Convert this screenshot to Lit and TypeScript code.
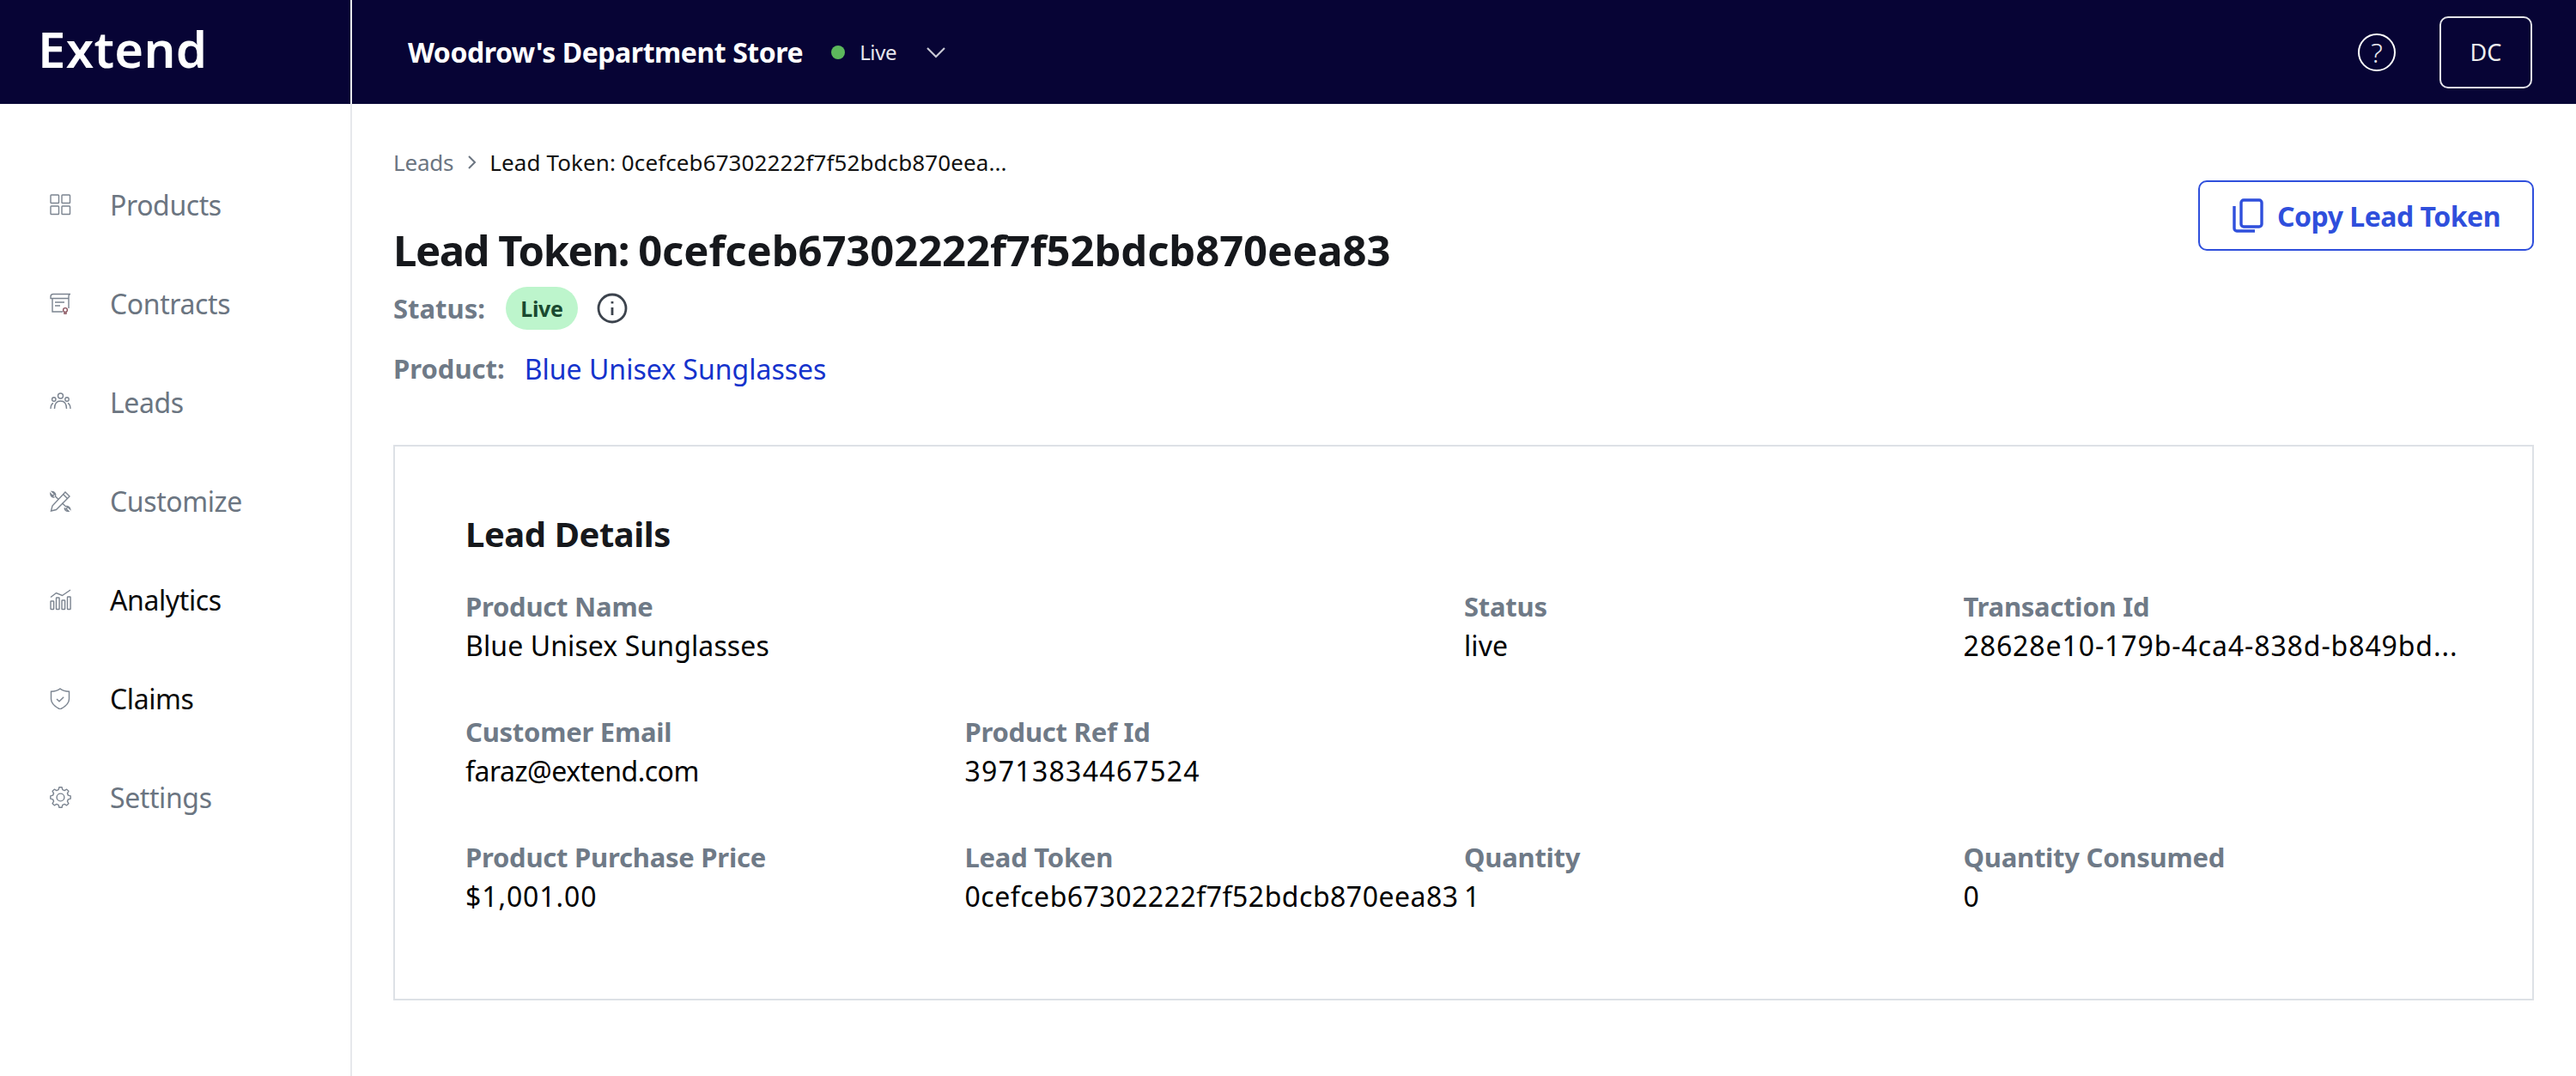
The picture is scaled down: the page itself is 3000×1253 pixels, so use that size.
import { LitElement, html, css, svg } from "lit";
import { customElement } from "lit/decorators.js";

function gearPath(): string {
  const teeth = 8;
  const pts: string[] = [];
  for (let i = 0; i < teeth; i++) {
    const a = (i / teeth) * Math.PI * 2;
    const step = (Math.PI * 2) / teeth;
    const list: [number, number][] = [
      [a - step * 0.17, 11.800],
      [a + step * 0.17, 11.800],
      [a + step * 0.33, 9.200],
      [a + step * 0.67, 9.200],
    ];
    for (const [ang, r] of list) {
      pts.push(`${(12.5 + r * Math.sin(ang)).toFixed(2)} ${(12.5 - r * Math.cos(ang)).toFixed(2)}`);
    }
  }
  return "M" + pts.join("L") + "z";
}

const navIcons: Record<string, unknown> = {
  grid: svg`<rect x="1" y="1" width="9.5" height="9.5" rx=".8"/><rect x="14" y="1" width="9.5" height="9.5" rx=".8"/><rect x="1" y="14" width="9.5" height="9.5" rx=".8"/><rect x="14" y="14" width="9.5" height="9.5" rx=".8"/>`,
  contract: svg`<path d="M3 7v15h12M22 18V4c0-1.500.8-2.500 2-2.500H4C2 1.500 1 2.800 1 4.500v2h21"/><path d="M6 11h11M6 15h6"/><circle cx="18" cy="20" r="2.400" stroke="#8a5560"/><path d="M17 22.500V26l1-1 1 1v-3.500" stroke="#8a5560"/>`,
  people: svg`<circle cx="12.500" cy="5" r="3"/><circle cx="4.800" cy="9" r="2.200"/><circle cx="20" cy="9" r="2.200"/><path d="M5.500 20c0-6 3-9 7-9s7 3 7 9"/><path d="M1 20c0-3.500 1-5.500 3-6.500M24 20c0-3.500-1-5.500-3-6.500"/>`,
  tools: svg`<path d="M18 2l5 5L7.500 22.500 1.500 24 3 18z"/><path d="M15.500 4.500l5 5"/><path d="M10 10.500L6.500 7c1-2.500-.8-5.500-4-5.500L5.500 4.500 3.500 6.500.8 3.800C.8 6.800 3 8.500 5.500 7.800"/><path d="M14.500 15l4 3.800c2-.8 5 .5 5.300 3.200l-2.800-2.500-2 2 2.800 2.700c-3 .3-5-1.800-4.300-4"/>`,
  chart: svg`<rect x="1" y="14" width="3.600" height="9.500" rx=".6"/><rect x="7.500" y="10" width="3.600" height="13.500" rx=".6"/><rect x="14" y="13" width="3.600" height="10.500" rx=".6"/><rect x="20.500" y="9" width="3.600" height="14.500" rx=".6"/><path d="M1 9.500L7.500 4.500 14.500 7.500 24 1"/>`,
  shield: svg`<path d="M12 1c2.500 2 6 3.200 10.500 3.200V13c0 5.500-4.500 9-10.500 12C6 22 1.500 18.500 1.500 13V4.200C6 4.200 9.500 3 12 1z"/><path d="M8 13l3 2.800 5.200-5" />`,
  gear: svg`<circle cx="12.500" cy="12.500" r="4.400"/><path stroke-linejoin="round" d=${gearPath()} />`,
};

const nav = [
  ["Products", "grid", false],
  ["Contracts", "contract", false],
  ["Leads", "people", false],
  ["Customize", "tools", false],
  ["Analytics", "chart", true],
  ["Claims", "shield", true],
  ["Settings", "gear", false],
] as const;

const rows = [
  [["Product Name", "Blue Unisex Sunglasses", "", 2], ["Status", "live", "", 1], ["Transaction Id", "28628e10-179b-4ca4-838d-b849bd...", "hash", 1]],
  [["Customer Email", "faraz@extend.com", "tight", 1], ["Product Ref Id", "39713834467524", "digits", 1], null, null],
  [["Product Purchase Price", "$1,001.00", "hash", 1], ["Lead Token", "0cefceb67302222f7f52bdcb870eea83", "token", 1], ["Quantity", "1", "", 1], ["Quantity Consumed", "0", "", 1]],
] as const;

@customElement("app-root")
export class AppRoot extends LitElement {
  static styles = css`
    :host { display: block; width: 3000px; height: 1253px; overflow: hidden; background: #fff; font-family: "Noto Sans", "Open Sans", sans-serif; color: #000; }
    .top { display: flex; height: 121px; background: #070435; color: #fff; align-items: center; }
    .logo { box-sizing: border-box; width: 410px; height: 100%; border-right: 2px solid #e6e8ec; padding-left: 44px; display: flex; align-items: center; font-size: 58px; font-weight: 600; letter-spacing: 0.3px; padding-bottom: 8px; }
    .store { margin-left: 65px; font-size: 32px; font-weight: 700; letter-spacing: -0.45px; }
    .dot { width: 16px; height: 16px; border-radius: 50%; background: #5cb85c; margin-left: 33px; }
    .live { margin-left: 17px; font-size: 24px; color: #e6e6ee; letter-spacing: -0.4px; }
    .chev { margin-left: 34px; width: 24px; height: 14px; fill: none; stroke: #c8c8d4; stroke-width: 2.200; }
    .grow { flex: 1; }
    .help { box-sizing: border-box; width: 44px; height: 44px; border: 2px solid #fff; border-radius: 50%; margin-right: 51px; display: flex; align-items: center; justify-content: center; font-size: 32px; line-height: 40px; font-weight: 300; color: #e6e6ee; }
    .user { box-sizing: border-box; width: 108px; height: 84px; margin-right: 51px; border: 2px solid #e4e4ea; border-radius: 10px; display: flex; align-items: center; justify-content: center; font-size: 27px; color: #eee; }
    .body { display: flex; height: 1132px; }
    .side { box-sizing: border-box; width: 410px; border-right: 2px solid #e6e8ec; padding: 87px 0 0 58px; display: flex; flex-direction: column; gap: 55px; }
    .nav { display: flex; align-items: center; height: 60px; font-size: 32px; letter-spacing: -0.4px; color: #6b7581; }
    .nav.dark { color: #0a0a0a; }
    .nav svg { width: 25px; height: 25px; margin-right: 45px; fill: none; stroke: #7b8490; stroke-width: 1.400; flex: none; }
    .main { flex: 1; padding: 48px 49px 0 48px; min-width: 0; }
    .crumb { display: flex; align-items: center; height: 40px; font-size: 26px; letter-spacing: -0.2px; color: #111; }
    .crumb span:first-child { color: #6b7581; }
    .crumb span:last-child { letter-spacing: 0.1px; }
    .crumb svg { width: 12px; height: 18px; margin: 0 15px 0 15px; fill: none; stroke: #6b7581; stroke-width: 2; }
    .head { display: flex; justify-content: space-between; align-items: flex-start; margin-top: -17px; }
    h1 { margin: 63px 0 0; font-size: 49px; line-height: 72px; font-weight: 700; letter-spacing: -0.1px; color: #16181c; }
    h1 span { letter-spacing: -1.500px; }
    .copy { box-sizing: border-box; width: 391px; height: 82px; margin-top: 18px; border: 2px solid #2f4fdc; border-radius: 10px; background: #fff; color: #2f4fdc; display: flex; align-items: center; justify-content: center; gap: 15px; font: 700 32px "Noto Sans", sans-serif; letter-spacing: -0.5px; padding: 0; }
    .copy svg { width: 38px; height: 42px; fill: none; stroke: #2f4fdc; stroke-width: 3.400; }
    .meta { display: flex; align-items: center; font-size: 31px; font-weight: 700; letter-spacing: 0; color: #6f7a87; }
    .m1 { margin-top: 7px; height: 50px; }
    .m2 { margin-top: 20px; height: 50px; }
    .pill { margin-left: 24px; width: 84px; height: 50px; border-radius: 25px; background: #bdf5cc; color: #1a4a30; font-size: 25px; display: flex; align-items: center; justify-content: center; letter-spacing: -0.3px; }
    .info { width: 36px; height: 36px; margin-left: 22px; fill: none; stroke: #3c434d; stroke-width: 2.800; }
    .link { margin-left: 23px; font-weight: 400; color: #1533cc; font-size: 32px; letter-spacing: 0; }
    .card { box-sizing: border-box; height: 647px; margin-top: 64px; border: 2px solid #dde1e6; padding: 74px 82px 0; }
    h2 { margin: 0; font-size: 40px; line-height: 56px; font-weight: 700; letter-spacing: -0.45px; color: #16181c; }
    .grid { display: grid; grid-template-columns: repeat(4, 581.500px); row-gap: 56px; margin-top: 34px; }
    .span2 { grid-column: span 2; }
    .k { font-size: 31px; line-height: 45px; font-weight: 700; letter-spacing: -0.25px; color: #6f7a87; white-space: nowrap; }
    .v { font-size: 32px; line-height: 45px; color: #000; letter-spacing: 0.1px; white-space: nowrap; }
    .v.tight { letter-spacing: -0.5px; }
    .v.hash { letter-spacing: 0.9px; }
    .v.digits { letter-spacing: 1.300px; }
    .v.token { letter-spacing: 0.5px; }
  `;

  render() {
    return html`
      <div class="top">
        <div class="logo">Extend</div>
        <div class="store">Woodrow's Department Store</div>
        <div class="dot"></div>
        <div class="live">Live</div>
        <svg class="chev" viewBox="0 0 24 14"><path d="M2 2l10 10L22 2"/></svg>
        <div class="grow"></div>
        <div class="help">?</div>
        <div class="user">DC</div>
      </div>
      <div class="body">
        <aside class="side">
          ${nav.map(([t, i, d]) => html`<div class="nav ${d ? "dark" : ""}"><svg viewBox="0 0 25 25">${navIcons[i]}</svg>${t}</div>`)}
        </aside>
        <main class="main">
          <div class="crumb"><span>Leads</span><svg viewBox="0 0 12 18"><path d="M3 2l7 7-7 7"/></svg><span>Lead Token: 0cefceb67302222f7f52bdcb870eea...</span></div>
          <div class="head">
            <h1><span>Lead Token: </span>0cefceb67302222f7f52bdcb870eea83</h1>
            <button class="copy"><svg viewBox="0 0 38 42"><rect x="11" y="3" width="24" height="31" rx="3"/><path d="M3 10v26a3 3 0 0 0 3 3h21"/></svg>Copy Lead Token</button>
          </div>
          <div class="meta m1">Status:<span class="pill">Live</span>
            <svg class="info" viewBox="0 0 36 36"><circle cx="18" cy="18" r="16"/><path d="M18 17v9M18 10v2.600"/></svg></div>
          <div class="meta m2">Product:<span class="link">Blue Unisex Sunglasses</span></div>
          <section class="card">
            <h2>Lead Details</h2>
            <div class="grid">
              ${rows.map((r) => r.map((c) => c ? html`<div class=${c[3] === 2 ? "span2" : ""}><div class="k">${c[0]}</div><div class="v ${c[2]}">${c[1]}</div></div>` : html`<div></div>`))}
            </div>
          </section>
        </main>
      </div>
    `;
  }
}
